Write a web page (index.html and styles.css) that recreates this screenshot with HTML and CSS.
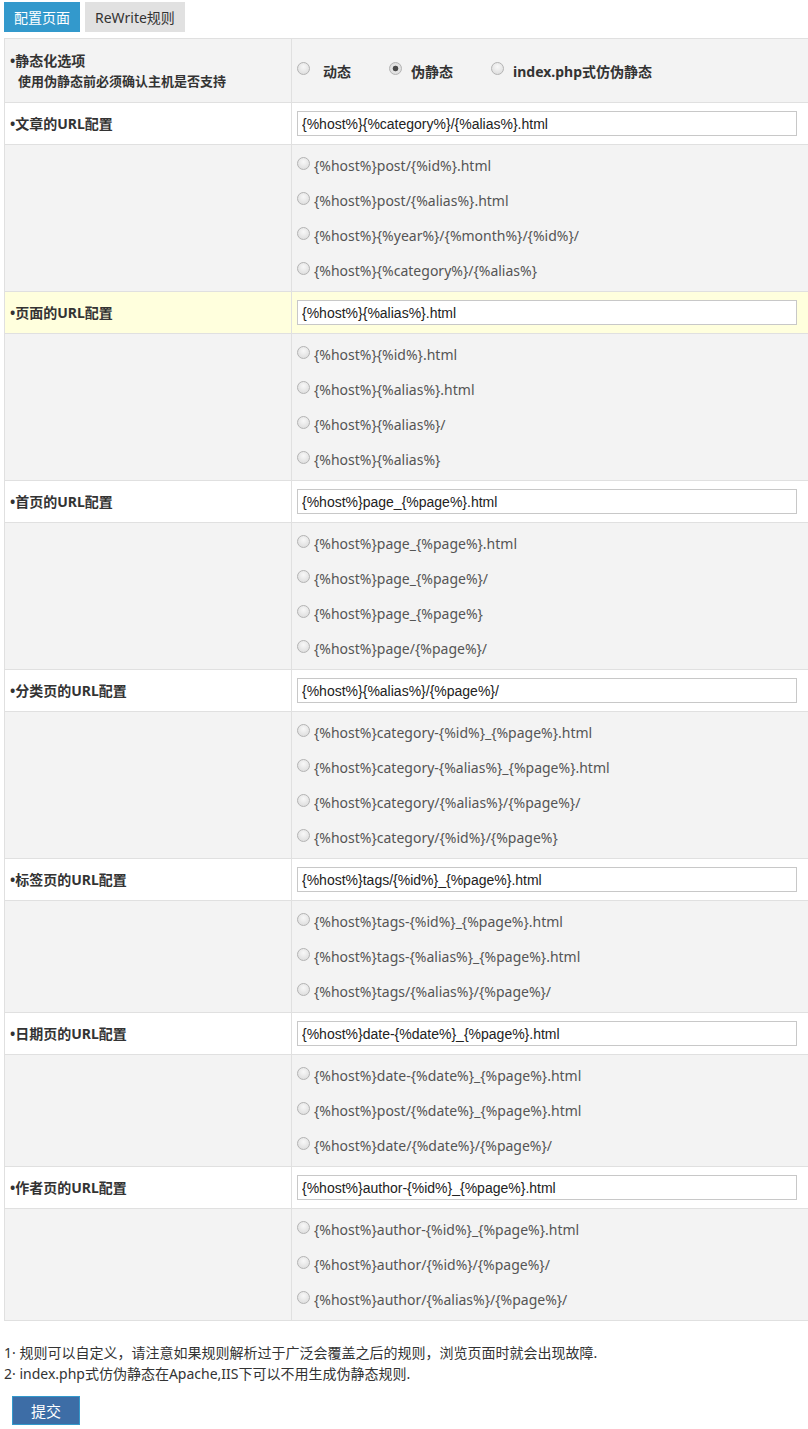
FILE: index.html
```html
<!DOCTYPE html>
<html lang="zh-CN">
<head>
  <meta charset="UTF-8" />
  <title>静态化配置</title>
  <link rel="stylesheet" href="styles.css">
</head>
<body>
  <div class="tabs">
    <span class="tab active">配置页面</span>
    <span class="tab">ReWrite规则</span>
  </div>

  <form class="config-form">
    <table class="config-table">
      <tr class="row-head">
        <td class="col-label">
          <p class="label">•静态化选项</p>
          <p class="hint">使用伪静态前必须确认主机是否支持</p>
        </td>
        <td class="col-value">
          <div class="mode-list">
            <label class="mode first"><input type="radio" name="mode" />动态</label>
            <label class="mode"><input type="radio" name="mode" checked />伪静态</label>
            <label class="mode"><input type="radio" name="mode" />index.php式仿伪静态</label>
          </div>
        </td>
      </tr>

      <tr class="row-input">
        <td class="col-label"><p class="label">•文章的URL配置</p></td>
        <td class="col-value"><input class="url-input" type="text" value="{%host%}{%category%}/{%alias%}.html" /></td>
      </tr>
      <tr class="row-options">
        <td class="col-label"></td>
        <td class="col-value">
          <label class="option"><input type="radio" name="post" />{%host%}post/{%id%}.html</label>
          <label class="option"><input type="radio" name="post" />{%host%}post/{%alias%}.html</label>
          <label class="option"><input type="radio" name="post" />{%host%}{%year%}/{%month%}/{%id%}/</label>
          <label class="option"><input type="radio" name="post" />{%host%}{%category%}/{%alias%}</label>
        </td>
      </tr>

      <tr class="row-input hover">
        <td class="col-label"><p class="label">•页面的URL配置</p></td>
        <td class="col-value"><input class="url-input" type="text" value="{%host%}{%alias%}.html" /></td>
      </tr>
      <tr class="row-options">
        <td class="col-label"></td>
        <td class="col-value">
          <label class="option"><input type="radio" name="page" />{%host%}{%id%}.html</label>
          <label class="option"><input type="radio" name="page" />{%host%}{%alias%}.html</label>
          <label class="option"><input type="radio" name="page" />{%host%}{%alias%}/</label>
          <label class="option"><input type="radio" name="page" />{%host%}{%alias%}</label>
        </td>
      </tr>

      <tr class="row-input">
        <td class="col-label"><p class="label">•首页的URL配置</p></td>
        <td class="col-value"><input class="url-input" type="text" value="{%host%}page_{%page%}.html" /></td>
      </tr>
      <tr class="row-options">
        <td class="col-label"></td>
        <td class="col-value">
          <label class="option"><input type="radio" name="index" />{%host%}page_{%page%}.html</label>
          <label class="option"><input type="radio" name="index" />{%host%}page_{%page%}/</label>
          <label class="option"><input type="radio" name="index" />{%host%}page_{%page%}</label>
          <label class="option"><input type="radio" name="index" />{%host%}page/{%page%}/</label>
        </td>
      </tr>

      <tr class="row-input">
        <td class="col-label"><p class="label">•分类页的URL配置</p></td>
        <td class="col-value"><input class="url-input" type="text" value="{%host%}{%alias%}/{%page%}/" /></td>
      </tr>
      <tr class="row-options">
        <td class="col-label"></td>
        <td class="col-value">
          <label class="option"><input type="radio" name="cate" />{%host%}category-{%id%}_{%page%}.html</label>
          <label class="option"><input type="radio" name="cate" />{%host%}category-{%alias%}_{%page%}.html</label>
          <label class="option"><input type="radio" name="cate" />{%host%}category/{%alias%}/{%page%}/</label>
          <label class="option"><input type="radio" name="cate" />{%host%}category/{%id%}/{%page%}</label>
        </td>
      </tr>

      <tr class="row-input">
        <td class="col-label"><p class="label">•标签页的URL配置</p></td>
        <td class="col-value"><input class="url-input" type="text" value="{%host%}tags/{%id%}_{%page%}.html" /></td>
      </tr>
      <tr class="row-options">
        <td class="col-label"></td>
        <td class="col-value">
          <label class="option"><input type="radio" name="tags" />{%host%}tags-{%id%}_{%page%}.html</label>
          <label class="option"><input type="radio" name="tags" />{%host%}tags-{%alias%}_{%page%}.html</label>
          <label class="option"><input type="radio" name="tags" />{%host%}tags/{%alias%}/{%page%}/</label>
        </td>
      </tr>

      <tr class="row-input">
        <td class="col-label"><p class="label">•日期页的URL配置</p></td>
        <td class="col-value"><input class="url-input" type="text" value="{%host%}date-{%date%}_{%page%}.html" /></td>
      </tr>
      <tr class="row-options">
        <td class="col-label"></td>
        <td class="col-value">
          <label class="option"><input type="radio" name="date" />{%host%}date-{%date%}_{%page%}.html</label>
          <label class="option"><input type="radio" name="date" />{%host%}post/{%date%}_{%page%}.html</label>
          <label class="option"><input type="radio" name="date" />{%host%}date/{%date%}/{%page%}/</label>
        </td>
      </tr>

      <tr class="row-input">
        <td class="col-label"><p class="label">•作者页的URL配置</p></td>
        <td class="col-value"><input class="url-input" type="text" value="{%host%}author-{%id%}_{%page%}.html" /></td>
      </tr>
      <tr class="row-options">
        <td class="col-label"></td>
        <td class="col-value">
          <label class="option"><input type="radio" name="auth" />{%host%}author-{%id%}_{%page%}.html</label>
          <label class="option"><input type="radio" name="auth" />{%host%}author/{%id%}/{%page%}/</label>
          <label class="option"><input type="radio" name="auth" />{%host%}author/{%alias%}/{%page%}/</label>
        </td>
      </tr>
    </table>

    <div class="notes">
      <p>1· 规则可以自定义，请注意如果规则解析过于广泛会覆盖之后的规则，浏览页面时就会出现故障.</p>
      <p>2· index.php式仿伪静态在Apache,IIS下可以不用生成伪静态规则.</p>
    </div>

    <button class="submit-btn" type="button">提交</button>
  </form>
</body>
</html>
```

FILE: styles.css
```css
body {
  margin: 0;
  padding: 2px 0 0 4px;
  font-family: "Noto Sans", "Noto Sans CJK SC", sans-serif;
  font-size: 14px;
  color: #333;
  background: #fff;
  overflow-x: hidden;
}
p {
  margin: 0;
}
.tabs {
  display: flex;
  gap: 5px;
  height: 30px;
}
.tab {
  display: flex;
  align-items: center;
  padding: 0 10px;
  background: #e1e1e1;
  color: #333;
  font-size: 14px;
}
.tab.active {
  background: #3399cc;
  color: #fff;
}
.config-table {
  margin-top: 6px;
  width: 830px;
  border-collapse: collapse;
  table-layout: fixed;
}
.config-table td {
  border: 1px solid #e0e0e0;
  padding: 0;
  vertical-align: middle;
}
.col-label {
  width: 281px;
  padding-left: 5px !important;
}
.col-value {
  padding-left: 5px !important;
}
.row-head td {
  height: 63px;
  background: #f3f3f3;
}
.row-input td {
  height: 41px;
  background: #fff;
}
.row-input.hover td {
  background: #ffffdd;
}
.row-options td {
  background: #f3f3f3;
  padding-top: 3px !important;
  padding-bottom: 3px !important;
}
.label {
  font-weight: bold;
  font-size: 14px;
  line-height: 20px;
}
.hint {
  font-weight: bold;
  font-size: 13px;
  line-height: 20px;
  padding-left: 8px;
}
.mode-list {
  display: flex;
  align-items: center;
}
.mode {
  display: flex;
  align-items: center;
  gap: 9px;
  font-weight: bold;
  font-size: 14px;
  margin-right: 38px;
}
.mode.first {
  gap: 13px;
}
.option {
  display: flex;
  align-items: center;
  gap: 4px;
  height: 35px;
  color: #555;
}
input[type="radio"] {
  appearance: none;
  -webkit-appearance: none;
  width: 13px;
  height: 13px;
  margin: 0;
  border: 1px solid #b4b4b4;
  border-radius: 50%;
  background: radial-gradient(circle at 50% 35%, #f8f8f8 0, #d8d8d8 100%);
  flex-shrink: 0;
  position: relative;
  top: -2px;
}
input[type="radio"]:checked {
  background: radial-gradient(circle, #4a4a4a 0, #4a4a4a 2.5px, #e6e6e6 3.2px, #d6d6d6 100%);
}
.url-input {
  width: 500px;
  height: 25px;
  box-sizing: border-box;
  border: 1px solid #c8c8c8;
  padding: 0 4px;
  font-family: "Liberation Sans", Arial, sans-serif;
  font-size: 14px;
  color: #222;
  outline: none;
}
.notes {
  margin-top: 21px;
  font-size: 14px;
  line-height: 21px;
}
.submit-btn {
  margin: 12px 0 0 8px;
  width: 68px;
  height: 29px;
  background: #3d6da6;
  border: 1px solid #3399cc;
  color: #fff;
  font-family: "Noto Sans CJK SC", sans-serif;
  font-size: 15px;
  cursor: pointer;
}
```
